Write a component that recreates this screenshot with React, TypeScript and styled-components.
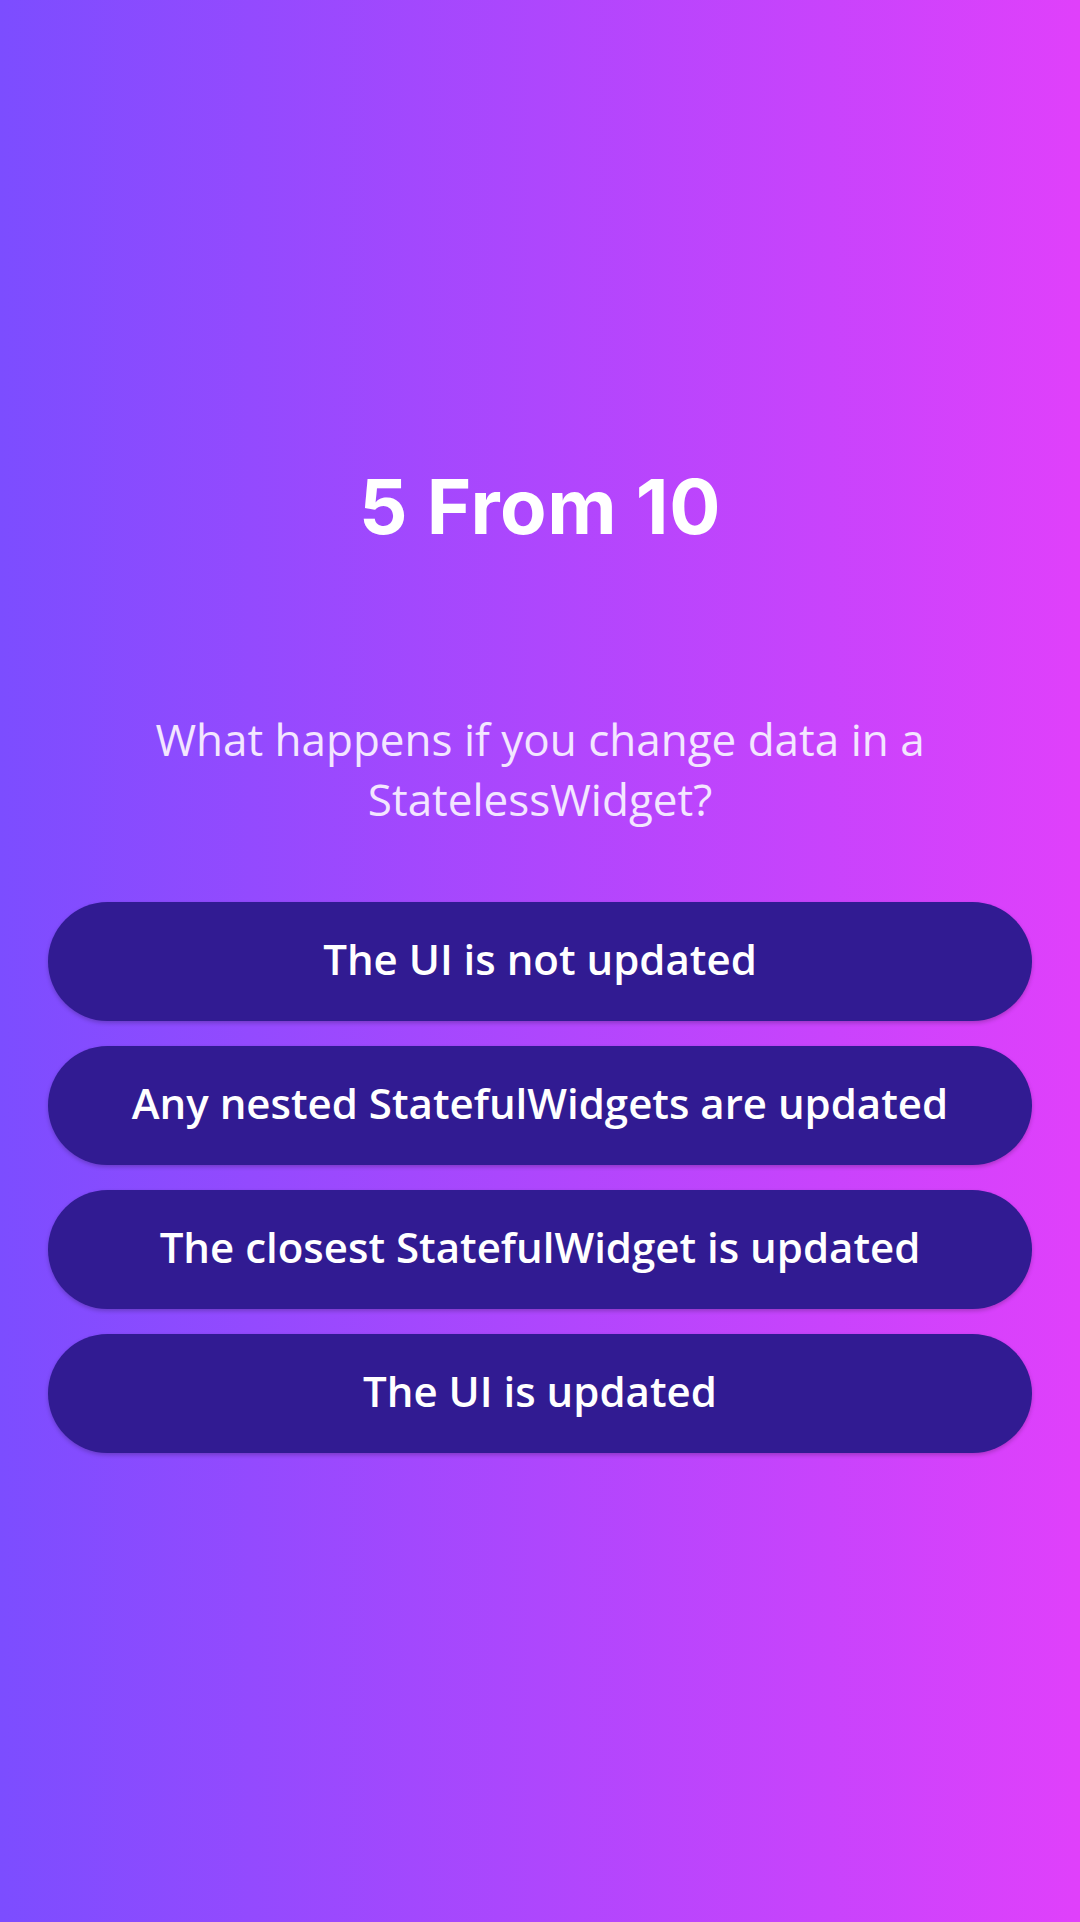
import React from "react";
import styled, { createGlobalStyle } from "styled-components";

const Global = createGlobalStyle`
  html, body { margin: 0; padding: 0; }
  body { font-family: "Open Sans", "Noto Sans", sans-serif; }
`;

const Screen = styled.main`
  width: 1080px;
  height: 1922px;
  box-sizing: border-box;
  background: linear-gradient(90deg, #7c4dff 0%, #e040fb 100%);
  display: flex;
  flex-direction: column;
  align-items: center;
  justify-content: center;
  padding: 0 48px 2px;
`;

const Title = styled.h1`
  margin: 0;
  font-family: Inter, Roboto, sans-serif;
  font-weight: 700;
  font-size: 76px;
  letter-spacing: 0.6px;
  line-height: 1;
  color: #ffffff;
`;

const Question = styled.p`
  margin: 165px 0 0;
  font-family: "Open Sans", "Noto Sans", sans-serif;
  font-weight: 400;
  font-size: 44px;
  line-height: 60px;
  color: #f3e6ff;
  text-align: center;
  max-width: 880px;
`;

const Answers = styled.div`
  margin-top: 73px;
  width: 100%;
  display: flex;
  flex-direction: column;
  gap: 25px;
`;

const AnswerButton = styled.button`
  height: 119px;
  width: 100%;
  border: none;
  border-radius: 60px;
  background: #311b92;
  color: #ffffff;
  font-family: "Open Sans", "Noto Sans", sans-serif;
  font-weight: 600;
  font-size: 42px;
  box-shadow: 0 2px 4px rgba(0, 0, 0, 0.22);
  cursor: pointer;
  padding: 0 30px 6px;
`;

const answers = [
  "The UI is not updated",
  "Any nested StatefulWidgets are updated",
  "The closest StatefulWidget is updated",
  "The UI is updated",
];

export default function App() {
  return (
    <>
      <Global />
      <Screen>
        <Title>5 From 10</Title>
        <Question>What happens if you change data in a StatelessWidget?</Question>
        <Answers>
          {answers.map((a) => (
            <AnswerButton key={a}>{a}</AnswerButton>
          ))}
        </Answers>
      </Screen>
    </>
  );
}
